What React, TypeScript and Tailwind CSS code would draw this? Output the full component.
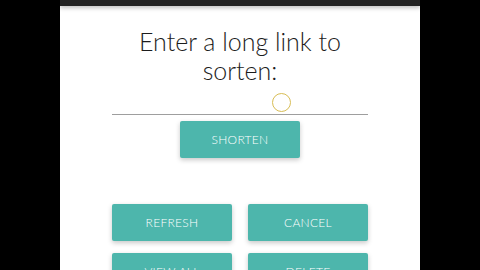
import React from "react";

const Btn = ({ label }: { label: string }) => (
  <button className="flex h-[37px] w-[120px] items-center justify-center rounded-[2px] bg-[#4db6ac] text-[12px] font-light uppercase tracking-[0.3px] text-white shadow-[0_2px_5px_rgba(0,0,0,0.22)]">
    {label}
  </button>
);

export default function App() {
  return (
    <div className="flex h-[270px] w-[480px] justify-center overflow-hidden bg-black" style={{ fontFamily: "Lato, 'Open Sans', sans-serif" }}>
      <div className="w-[360px] bg-white">
        {/* status bar */}
        <div className="h-[6px] bg-[#232323] shadow-[0_2px_4px_rgba(0,0,0,0.25)]" />

        <h1 className="mt-[21px] text-center text-[25px] font-light leading-[29px] text-[#1c1c1c]">
          Enter a long link to
          <br />
          sorten:
        </h1>

        {/* input */}
        <div className="relative mx-auto mt-[15px] h-[15px] w-[256px] border-b border-[#9e9e9e]">
          <span className="absolute left-[160px] top-[-7px] h-[19px] w-[19px] rounded-full border border-[#d8bd55]" />
        </div>

        <div className="mt-[6px] flex justify-center">
          <Btn label="Shorten" />
        </div>

        <div className="mt-[46px] grid grid-cols-[120px_120px] justify-center gap-x-[16px] gap-y-[12px]">
          <Btn label="Refresh" />
          <Btn label="Cancel" />
          <Btn label="View all" />
          <Btn label="Delete" />
        </div>
      </div>
    </div>
  );
}
